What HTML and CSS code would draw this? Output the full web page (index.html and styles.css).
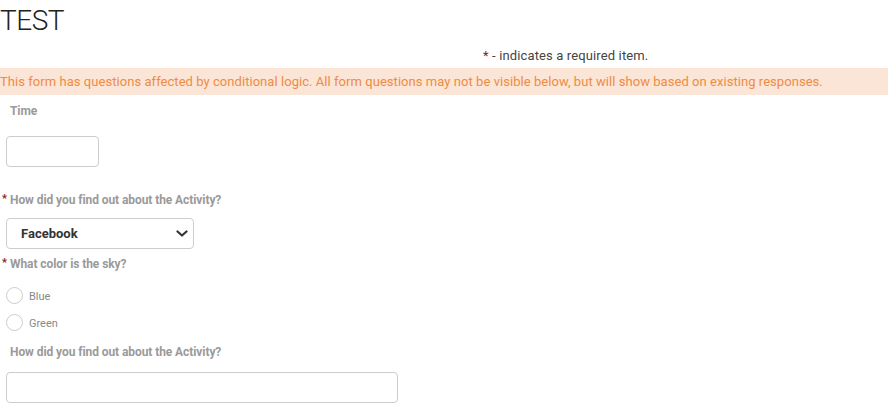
FILE: index.html
```html
<!DOCTYPE html>
<html lang="en">
<head>
<meta charset="utf-8">
<title>TEST</title>
<link rel="stylesheet" href="styles.css">
</head>
<body>
  <h1 class="title">TEST</h1>
  <p class="required-note"><span class="req-star">*</span> - indicates a required item.</p>
  <div class="notice">This form has questions affected by conditional logic. All form questions may not be visible below, but will show based on existing responses.</div>

  <form class="form">
    <label class="q-label q-time"><span class="star hidden">*</span>Time</label>
    <input class="field field-short" type="text">

    <label class="q-label q-activity"><span class="star">*</span>How did you find out about the Activity?</label>
    <div class="select-wrap">
      <select class="select">
        <option>Facebook</option>
      </select>
      <svg class="chevron" width="12" height="8" viewBox="0 0 12 8"><path d="M1.5 1.5 L6 5.5 L10.5 1.5" fill="none" stroke="#333" stroke-width="2.2" stroke-linecap="round" stroke-linejoin="round"/></svg>
    </div>

    <label class="q-label q-sky"><span class="star">*</span>What color is the sky?</label>
    <div class="radios">
      <label class="radio-row"><span class="radio"></span><span class="radio-text">Blue</span></label>
      <label class="radio-row"><span class="radio"></span><span class="radio-text">Green</span></label>
    </div>

    <label class="q-label q-activity2"><span class="star hidden">*</span>How did you find out about the Activity?</label>
    <input class="field field-long" type="text">
  </form>
</body>
</html>
```

FILE: styles.css
```css
html, body {
  margin: 0;
  padding: 0;
  background: #ffffff;
}

body {
  font-family: Roboto, "Liberation Sans", Arial, sans-serif;
  width: 888px;
  overflow: hidden;
}

.title {
  margin: 4px 0 0 0;
  font-size: 28px;
  font-weight: 300;
  line-height: 33px;
  color: #222222;
  letter-spacing: -0.5px;
}

.required-note {
  margin: 10px 0 3px 483px;
  font-size: 13px;
  line-height: 18px;
  color: #444444;
  letter-spacing: 0.13px;
}

.req-star {
  color: #8b1a1a;
}

.notice {
  background: #fbe5d6;
  color: #ef8b45;
  font-size: 13px;
  line-height: 27px;
  height: 27px;
  white-space: nowrap;
  letter-spacing: 0.05px;
}

.form {
  display: flex;
  flex-direction: column;
  align-items: flex-start;
  padding-left: 6px;
}

.q-label {
  display: block;
  font-size: 12px;
  font-weight: 700;
  line-height: 16px;
  color: #9a9a9a;
  margin-left: -4px;
  letter-spacing: -0.08px;
}

.star {
  display: inline-block;
  width: 8px;
  font-size: 11px;
  color: #8b1a1a;
  vertical-align: top;
  line-height: 14px;
}

.star.hidden {
  visibility: hidden;
}

.q-time { margin-top: 8px; }
.q-activity { margin-top: 25px; }
.q-sky { margin-top: 7px; }
.q-activity2 { margin-top: 13px; }

.field {
  box-sizing: border-box;
  height: 31px;
  border: 1px solid #cccccc;
  border-radius: 4px;
  background: #fff;
  padding: 0 8px;
  font-family: inherit;
  font-size: 13px;
  outline: none;
}

.field-short {
  width: 93px;
  margin-top: 17px;
}

.field-long {
  width: 392px;
  margin-top: 12px;
}

.select-wrap {
  position: relative;
  margin-top: 10px;
  width: 188px;
  height: 31px;
}

.select {
  -webkit-appearance: none;
  appearance: none;
  box-sizing: border-box;
  width: 188px;
  height: 31px;
  border: 1px solid #cccccc;
  border-radius: 4px;
  background: #fff;
  padding: 0 0 0 14px;
  font-family: inherit;
  font-size: 13px;
  font-weight: 700;
  color: #333333;
  outline: none;
}

.chevron {
  position: absolute;
  right: 6px;
  top: 12px;
}

.radios {
  display: flex;
  flex-direction: column;
  gap: 10px;
  margin-top: 15px;
}

.radio-row {
  display: flex;
  align-items: center;
  gap: 6px;
  height: 17px;
}

.radio {
  box-sizing: border-box;
  width: 17px;
  height: 17px;
  border: 1px solid #cccccc;
  border-radius: 50%;
  background: #fff;
}

.radio-text {
  font-size: 11px;
  line-height: 16px;
  padding-top: 2px;
  color: #8a8a8a;
}
```
